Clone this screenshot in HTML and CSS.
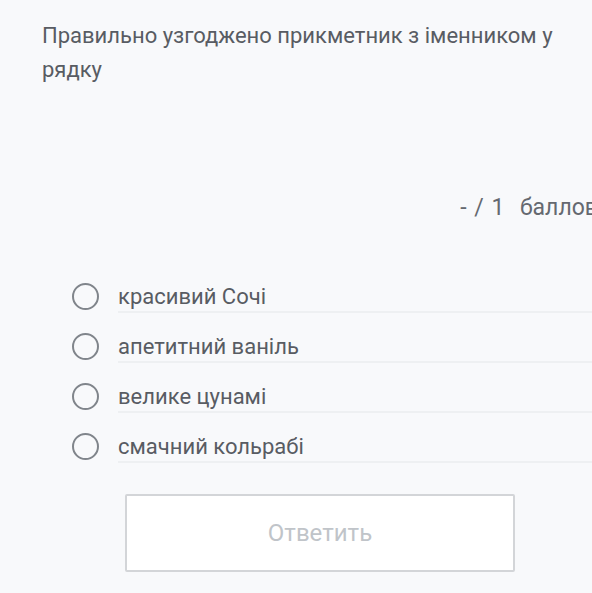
FILE: index.html
```html
<!DOCTYPE html>
<html lang="uk">
<head>
<meta charset="utf-8">
<link rel="stylesheet" href="styles.css">
</head>
<body>
<div class="page">
  <h1 class="question">Правильно узгоджено прикметник з іменником у рядку</h1>
  <div class="score">- / 1 &nbsp;баллов</div>
  <div class="options">
    <label class="option"><span class="radio"></span><span class="text">красивий Сочі</span></label>
    <label class="option"><span class="radio"></span><span class="text">апетитний ваніль</span></label>
    <label class="option"><span class="radio"></span><span class="text">велике цунамі</span></label>
    <label class="option"><span class="radio"></span><span class="text">смачний кольрабі</span></label>
  </div>
  <div class="actions">
    <button class="submit" disabled>Ответить</button>
  </div>
</div>
</body>
</html>
```
FILE: styles.css
```css
html, body {
  margin: 0;
  padding: 0;
  background: #f8f9fb;
  overflow: hidden;
}
.page {
  width: 640px;
  box-sizing: border-box;
  padding: 19px 42px 0 42px;
  font-family: Roboto, "Noto Sans", sans-serif;
  color: #585c63;
}
.question {
  margin: 0;
  font-size: 22px;
  font-weight: 400;
  line-height: 34px;
  width: 530px;
}
.score {
  margin-top: 106px;
  text-align: right;
  font-size: 23px;
  line-height: 30px;
  color: #656970;
  word-spacing: 2px;
}
.options {
  margin-top: 40px;
  padding-left: 30px;
}
.option {
  display: flex;
  align-items: flex-start;
}
.radio {
  flex: none;
  width: 27px;
  height: 27px;
  box-sizing: border-box;
  border: 2.5px solid #80858b;
  border-radius: 50%;
  margin-top: 20px;
  margin-right: 19px;
}
.text {
  flex: 1;
  font-size: 22px;
  line-height: 24px;
  padding-top: 22px;
  padding-bottom: 2px;
  border-bottom: 2px solid #eef0f2;
  color: #585c63;
}
.actions {
  display: flex;
  justify-content: center;
  margin-top: 31px;
}
.submit {
  width: 390px;
  height: 78px;
  background: #ffffff;
  border: 2px solid #d3d5d8;
  border-radius: 2px;
  font-family: Roboto, "Noto Sans", sans-serif;
  font-size: 24px;
  color: #c0c4c9;
}
```
